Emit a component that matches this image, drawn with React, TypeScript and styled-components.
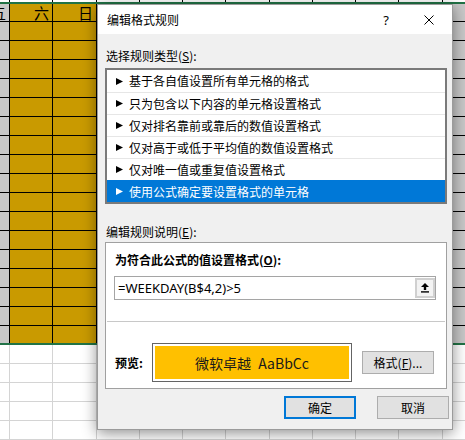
import React from "react";
import styled, { createGlobalStyle } from "styled-components";

const GlobalStyle = createGlobalStyle`
  html, body {
    margin: 0;
    padding: 0;
  }
  body {
    width: 465px;
    height: 440px;
    overflow: hidden;
    background: #ffffff;
    font-family: "Noto Sans CJK SC", "Noto Sans", sans-serif;
  }
`;

const Page = styled.div`
  position: relative;
  width: 465px;
  height: 440px;
  overflow: hidden;
`;

/* ---------- spreadsheet behind the dialog ---------- */

const Sheet = styled.div`
  display: flex;
  flex-direction: column;
`;

const Row = styled.div<{ $h: number }>`
  display: flex;
  height: ${(p) => p.$h}px;
  flex: 0 0 auto;
`;

const Cell = styled.div<{
  $w: number;
  $fill: string;
  $line: string;
  $bottom: boolean;
  $clip: boolean;
}>`
  flex: 0 0 ${(p) => p.$w}px;
  box-sizing: border-box;
  background: ${(p) => p.$fill};
  border-right: 1px solid ${(p) => p.$line};
  border-bottom: ${(p) => (p.$bottom ? `1px solid ${p.$line}` : "none")};
  display: flex;
  justify-content: flex-end;
  align-items: center;
  overflow: ${(p) => (p.$clip ? "hidden" : "visible")};
  padding-right: 3px;
  font-size: 15px;
  line-height: 17px;
  white-space: nowrap;
  color: #000;
`;

const SelectionEdge = styled.div`
  height: 2px;
  flex: 0 0 auto;
  background: #217346;
`;

const WIDTHS = [10, 43, 44, 43, 43, 43, 44, 43, 43, 43, 44, 43];
const GOLD = "#c99a00";
const GRAY = "#c8c8c8";

function SheetRow({
  h,
  kind,
  bottom,
  labels,
}: {
  h: number;
  kind: "top" | "sel" | "plain";
  bottom: boolean;
  labels?: string[];
}) {
  return (
    <Row $h={h}>
      {WIDTHS.map((w, i) => {
        let fill = "#ffffff";
        let line = "#d4d4d4";
        if (kind === "top") line = "#000";
        if (kind === "sel") {
          fill = i === 1 || i === 2 ? GOLD : GRAY;
          line = "#000";
        }
        return (
          <Cell key={i} $w={w} $fill={fill} $line={line} $bottom={bottom} $clip={i === 0}>
            {labels ? labels[i] : null}
          </Cell>
        );
      })}
    </Row>
  );
}

/* ---------- dialog ---------- */

const Dialog = styled.div`
  position: absolute;
  left: 97px;
  top: 4px;
  width: 356px;
  height: 426px;
  box-sizing: border-box;
  border: 1px solid #9b9b9b;
  background: #f0f0f0;
  box-shadow: 0 3px 14px rgba(0, 0, 0, 0.45);
  display: flex;
  flex-direction: column;
  font-size: 12px;
  color: #000;
`;

const TitleBar = styled.div`
  height: 29px;
  flex: 0 0 auto;
  background: #ffffff;
  display: flex;
  align-items: center;
  padding-left: 9px;
`;

const Title = styled.span`
  font-size: 12px;
  line-height: 16px;
  flex: 1;
`;

const TitleButton = styled.div<{ $w: number }>`
  width: ${(p) => p.$w}px;
  height: 29px;
  display: flex;
  align-items: center;
  justify-content: center;
  font-family: "Noto Sans", sans-serif;
  font-size: 13px;
`;

const Label = styled.div<{ $top: number }>`
  margin: ${(p) => p.$top}px 0 0 8px;
  line-height: 16px;
  height: 16px;
`;

const ListBox = styled.div`
  margin: 4px 0 0 7px;
  width: 342px;
  box-sizing: border-box;
  border: 2px solid #7a7a7a;
  background: #ffffff;
  display: flex;
  flex-direction: column;
`;

const ListItem = styled.div<{ $selected: boolean; $first: boolean }>`
  height: 22px;
  box-sizing: border-box;
  border-top: ${(p) =>
    p.$first ? "none" : `1px solid ${p.$selected ? "#0078d7" : "#e6e6e6"}`};
  background: ${(p) => (p.$selected ? "#0078d7" : "transparent")};
  color: ${(p) => (p.$selected ? "#ffffff" : "#000")};
  display: flex;
  align-items: center;
  padding-left: 9px;
  gap: 6px;
  line-height: 16px;
  svg {
    flex: 0 0 auto;
  }
`;

const DescBox = styled.div`
  margin: 2px 0 0 7px;
  width: 342px;
  height: 147px;
  box-sizing: border-box;
  border: 1px solid #a0a0a0;
  background: #ffffff;
  display: flex;
  flex-direction: column;
`;

const BoldLabel = styled.div`
  margin: 9px 0 0 9px;
  font-weight: 700;
  line-height: 16px;
  height: 16px;
`;

const FormulaRow = styled.div`
  margin: 8px 0 0 8px;
  width: 322px;
  height: 24px;
  box-sizing: border-box;
  border: 1px solid #a5a5a5;
  display: flex;
  align-items: stretch;
`;

const FormulaText = styled.div`
  flex: 1;
  padding-left: 3px;
  display: flex;
  align-items: center;
  font-family: "Noto Sans", "Noto Sans CJK SC", sans-serif;
  font-size: 13px;
  line-height: 18px;
`;

const PickButton = styled.div`
  flex: 0 0 20px;
  margin: 1px 0;
  box-sizing: border-box;
  border: 2px solid #d0d0d0;
  background: #f3f3f3;
  display: flex;
  align-items: center;
  justify-content: center;
`;

const Divider = styled.div`
  margin: 21px 1px 0 1px;
  height: 1px;
  background: #c8c8c8;
`;

const PreviewRow = styled.div`
  margin-top: 21px;
  height: 39px;
  display: flex;
  align-items: center;
`;

const PreviewLabel = styled.div`
  width: 37px;
  margin-left: 9px;
  font-weight: 700;
  line-height: 16px;
`;

const PreviewBox = styled.div`
  width: 200px;
  height: 39px;
  box-sizing: border-box;
  border: 1px solid #646464;
  padding: 2px;
  background: #ffffff;
`;

const PreviewFill = styled.div`
  height: 100%;
  background: #ffc000;
  display: flex;
  align-items: center;
  justify-content: center;
  font-size: 14px;
  word-spacing: 4px;
  color: #1a1a1a;
  white-space: pre;
`;

const Button = styled.div<{ $default?: boolean }>`
  width: 72px;
  height: 23px;
  box-sizing: border-box;
  border: ${(p) => (p.$default ? "2px solid #0078d7" : "1px solid #adadad")};
  background: #e1e1e1;
  display: flex;
  align-items: center;
  justify-content: center;
  line-height: 16px;
  font-size: 12px;
`;

const FormatButton = styled(Button)`
  margin-left: 10px;
`;

const Footer = styled.div`
  margin-top: 7px;
  padding-right: 3px;
  display: flex;
  justify-content: flex-end;
  gap: 21px;
`;

const Arrow = ({ color }: { color: string }) => (
  <svg width="7" height="7" viewBox="0 0 7 7">
    <polygon points="0,0 7,3.5 0,7" fill={color} />
  </svg>
);

const RULES = [
  "基于各自值设置所有单元格的格式",
  "只为包含以下内容的单元格设置格式",
  "仅对排名靠前或靠后的数值设置格式",
  "仅对高于或低于平均值的数值设置格式",
  "仅对唯一值或重复值设置格式",
  "使用公式确定要设置格式的单元格",
];

export default function App() {
  const selectedRule = 5;
  const bodyRows = Array.from({ length: 16 });
  const plainRows = Array.from({ length: 5 });
  const header = ["五", "六", "日", "", "", "", "", "", "", "", "", ""];

  return (
    <Page>
      <GlobalStyle />
      <Sheet>
        <SheetRow h={2} kind="top" bottom={false} />
        <SelectionEdge />
        <SheetRow h={18} kind="sel" bottom labels={header} />
        {bodyRows.map((_, i) => (
          <SheetRow key={i} h={19} kind="sel" bottom />
        ))}
        <SheetRow h={17} kind="sel" bottom={false} />
        <SelectionEdge />
        {plainRows.map((_, i) => (
          <SheetRow key={i} h={19} kind="plain" bottom />
        ))}
      </Sheet>

      <Dialog>
        <TitleBar>
          <Title>编辑格式规则</Title>
          <TitleButton $w={40}>?</TitleButton>
          <TitleButton $w={46}>
            <svg width="10" height="10" viewBox="0 0 10 10">
              <path d="M0.5 0.5 L9.5 9.5 M9.5 0.5 L0.5 9.5" stroke="#000" strokeWidth="1" />
            </svg>
          </TitleButton>
        </TitleBar>

        <Label $top={14}>
          选择规则类型(<u>S</u>):
        </Label>
        <ListBox>
          {RULES.map((r, i) => (
            <ListItem key={r} $selected={i === selectedRule} $first={i === 0}>
              <Arrow color={i === selectedRule ? "#ffffff" : "#000"} />
              {r}
            </ListItem>
          ))}
        </ListBox>

        <Label $top={20}>
          编辑规则说明(<u>E</u>):
        </Label>
        <DescBox>
          <BoldLabel>
            为符合此公式的值设置格式(<u>O</u>):
          </BoldLabel>
          <FormulaRow>
            <FormulaText>=WEEKDAY(B$4,2)&gt;5</FormulaText>
            <PickButton>
              <svg width="8" height="10" viewBox="0 0 8 10">
                <polygon points="4,0 8,4 0,4" fill="#000" />
                <rect x="2.8" y="4" width="2.4" height="3" fill="#000" />
                <rect x="0" y="8.2" width="8" height="1.4" fill="#000" />
              </svg>
            </PickButton>
          </FormulaRow>
          <Divider />
          <PreviewRow>
            <PreviewLabel>预览:</PreviewLabel>
            <PreviewBox>
              <PreviewFill>微软卓越 AaBbCc</PreviewFill>
            </PreviewBox>
            <FormatButton>
              格式(<u>F</u>)...
            </FormatButton>
          </PreviewRow>
        </DescBox>

        <Footer>
          <Button $default>确定</Button>
          <Button>取消</Button>
        </Footer>
      </Dialog>
    </Page>
  );
}
